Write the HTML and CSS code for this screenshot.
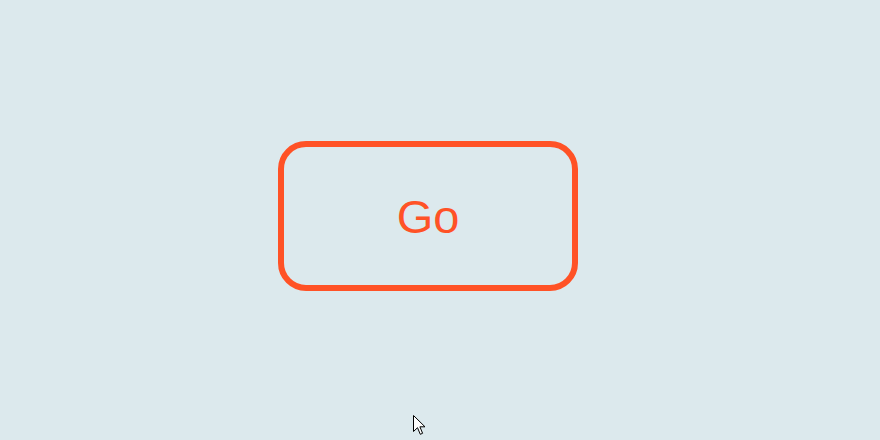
FILE: index.html
```html
<!DOCTYPE html>
<html lang="en">
<head>
<meta charset="utf-8">
<title>Go</title>
<link rel="stylesheet" href="styles.css">
</head>
<body>
<main class="stage">
  <button class="go-btn" type="button">Go</button>
</main>
<svg class="cursor" width="14" height="22" viewBox="0 0 14 22" aria-hidden="true">
  <path d="M0.5 0.5 L0.5 16.5 L4.5 12.7 L7.3 19.3 L9.6 18.3 L6.9 11.8 L12 11.8 Z" fill="#fff" stroke="#000" stroke-width="1" stroke-linejoin="miter"/>
</svg>
</body>
</html>
```
FILE: styles.css
```css
html, body {
  margin: 0;
  padding: 0;
}
body {
  width: 880px;
  height: 440px;
  background: #dce9ed;
  font-family: "Liberation Sans", Arial, sans-serif;
  overflow: hidden;
  position: relative;
}
.stage {
  display: flex;
  padding: 141px 0 0 278px;
}
.go-btn {
  box-sizing: border-box;
  width: 300px;
  height: 150px;
  border: 6px solid #ff5226;
  border-radius: 28px;
  background: transparent;
  color: #ff5226;
  font-family: "Liberation Sans", Arial, sans-serif;
  font-size: 47px;
  line-height: 1;
  padding: 0;
  display: flex;
  align-items: center;
  justify-content: center;
  cursor: pointer;
}
.cursor {
  position: absolute;
  left: 413px;
  top: 415px;
}
```
